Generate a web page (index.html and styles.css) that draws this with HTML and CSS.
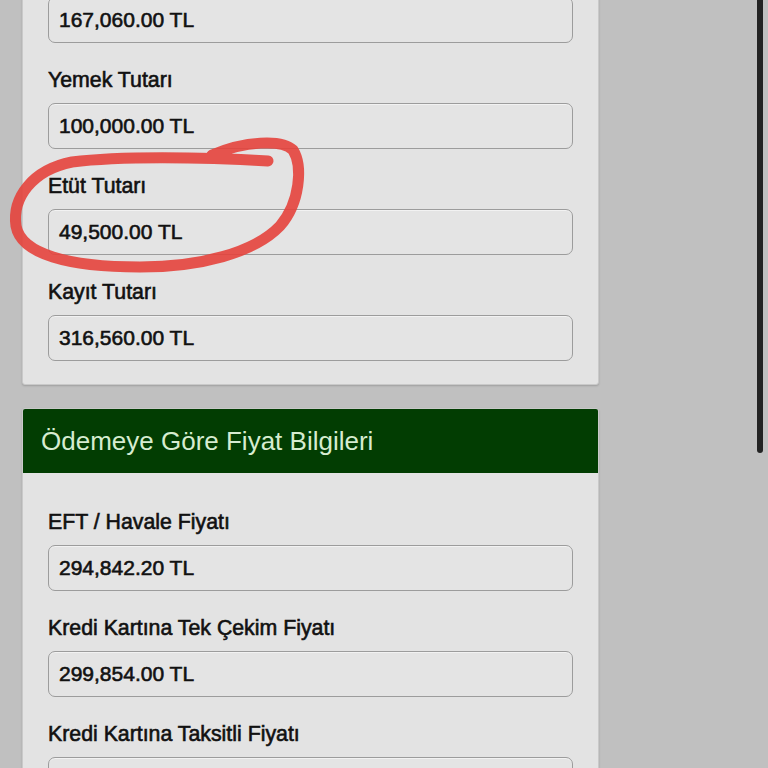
FILE: index.html
```html
<!DOCTYPE html>
<html lang="tr">
<head>
  <meta charset="UTF-8">
  <meta name="viewport" content="width=device-width, initial-scale=1.0">
  <title>Fiyat Bilgileri</title>
  <link rel="stylesheet" href="styles.css">
</head>
<body>
  <main class="page">
    <section class="card">
      <div class="card-body">
        <div class="field">
          <label>Eğitim Tutarı</label>
          <div class="value">167,060.00 TL</div>
        </div>
        <div class="field">
          <label>Yemek Tutarı</label>
          <div class="value">100,000.00 TL</div>
        </div>
        <div class="field">
          <label>Etüt Tutarı</label>
          <div class="value">49,500.00 TL</div>
        </div>
        <div class="field">
          <label>Kayıt Tutarı</label>
          <div class="value">316,560.00 TL</div>
        </div>
      </div>
    </section>

    <section class="card">
      <h2 class="card-head">Ödemeye Göre Fiyat Bilgileri</h2>
      <div class="card-body">
        <div class="field">
          <label>EFT / Havale Fiyatı</label>
          <div class="value">294,842.20 TL</div>
        </div>
        <div class="field">
          <label>Kredi Kartına Tek Çekim Fiyatı</label>
          <div class="value">299,854.00 TL</div>
        </div>
        <div class="field">
          <label>Kredi Kartına Taksitli Fiyatı</label>
          <div class="value">&nbsp;</div>
        </div>
      </div>
    </section>
  </main>

  <!-- hand-drawn red mark over the screenshot -->
  <svg class="mark" width="768" height="768" viewBox="0 0 768 768">
    <path d="M268 161 C200 157 120 156 72 162 C32 170 12 198 16 226 C21 254 68 267 140 267 C200 267 254 253 280 226 C300 203 303 166 293 150 C282 139 244 141 212 155"
          fill="none" stroke="#e4433c" stroke-width="11" stroke-linecap="round" stroke-linejoin="round" opacity="0.9"/>
  </svg>

  <div class="scroll-thumb"></div>
</body>
</html>
```

FILE: styles.css
```css
* {
  margin: 0;
  padding: 0;
  box-sizing: border-box;
}

body {
  background-color: #c0c0c0;
  font-family: "Liberation Sans", Arial, Helvetica, sans-serif;
  color: #111;
  overflow: hidden;
}

.page {
  width: 577px;
  margin: -76px 0 0 22px;
}

.card {
  background-color: #e3e3e3;
  border: 1px solid #c9c9c9;
  border-radius: 3px;
  box-shadow: 0 1px 2px rgba(0, 0, 0, .18);
  margin-bottom: 23px;
  overflow: hidden;
}

.card-head {
  height: 64px;
  display: flex;
  align-items: center;
  padding: 0 18px;
  background-color: #023d02;
  color: #d6ecd0;
  font-size: 26px;
  font-weight: normal;
}

.card-body {
  padding: 12px 25px 23px;
}

.field {
  padding-top: 25px;
}

.field label {
  display: block;
  font-size: 21.3px;
  line-height: 24px;
  -webkit-text-stroke: 0.6px #111;
  margin-bottom: 11px;
}

.field .value {
  height: 46px;
  line-height: 44px;
  padding-left: 10px;
  border: 1px solid #9c9c9c;
  border-radius: 7px;
  background-color: #e4e4e4;
  box-shadow: inset 0 1px 0 rgba(255, 255, 255, .5);
  font-size: 21px;
  -webkit-text-stroke: 0.6px #111;
}

.mark {
  position: fixed;
  top: 0;
  left: 0;
  pointer-events: none;
}

.scroll-thumb {
  position: fixed;
  top: -10px;
  left: 757px;
  width: 6px;
  height: 463px;
  border-radius: 3px;
  background-color: #232323;
}
```
